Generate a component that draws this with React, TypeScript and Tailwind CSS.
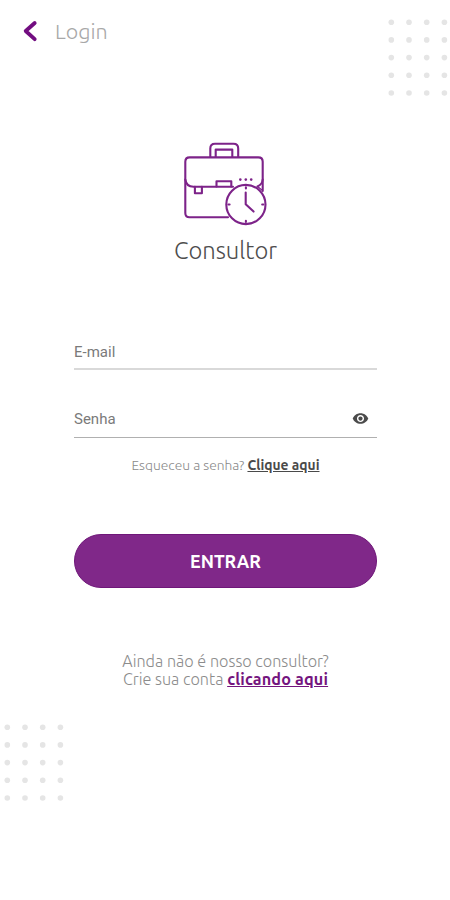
import { useState } from "react";

const UBUNTU = "font-['Ubuntu','Noto_Sans',sans-serif]";

function DotGrid({ className = "" }: { className?: string }) {
  const cols = [0, 1, 2, 3];
  const rows = [0, 1, 2, 3, 4];

  return (
    <svg width="60" height="79" viewBox="0 0 60 79" className={className} fill="#e5e5e5" aria-hidden="true">
      {rows.map((r) =>
        cols.map((c) => <circle key={`${r}-${c}`} cx={3.3 + c * 17.7} cy={4.2 + r * 17.7} r="2.8" />)
      )}
    </svg>
  );
}

function BriefcaseIcon() {
  return (
    <svg
      width="84"
      height="84"
      viewBox="183 142 84 84"
      fill="none"
      stroke="#7d2389"
      strokeWidth="2.1"
      strokeLinecap="round"
      strokeLinejoin="round"
      aria-hidden="true"
    >
      {/* Handle */}
      <path d="M210.3 157V148.5Q210.3 143.8 215 143.8H233.5Q238.2 143.8 238.2 148.5V157" />
      <path d="M215.7 157V149.6H232.3V157" />
      {/* Body */}
      <path d="M228 217.3H189.5Q185.3 217.3 185.3 213V161.8Q185.3 157.4 189.7 157.4H258.3Q262.7 157.4 262.7 161.8V191" />
      {/* Flap */}
      <path d="M185.3 179.5Q186.3 186.7 193.5 186.7H233M262.7 179.5Q262.2 184.5 257.5 186.4" />
      <path d="M216.5 186.5V181.2H231.3V186.5" />
      <path d="M194.9 186.7V193.3H201.9V186.7" />
      <path d="M257.5 186.5L262.5 190.5" strokeWidth="1.3" />
      {/* Clock */}
      <circle cx="245.9" cy="204.5" r="19.6" fill="#fff" />
      <path d="M245.7 192.5V204.3L253.6 211.6" />
      <path d="M245.9 187.2V188.4M245.9 220.8V222M228.4 204.5H229.6M262.2 204.5H263.4" />
      <g fill="#7d2389" stroke="none">
        <circle cx="240.3" cy="179.6" r="1.3" />
        <circle cx="245.8" cy="179.6" r="1.3" />
        <circle cx="251.2" cy="179.6" r="1.3" />
      </g>
    </svg>
  );
}

export default function App() {
  const [visible, setVisible] = useState(false);

  return (
    <div className={`flex h-[900px] w-[450px] flex-col overflow-hidden bg-white ${UBUNTU}`}>
      {/* Header */}
      <header className="flex h-[142px] shrink-0 items-start justify-between pt-[18px]">
        <div className="flex items-center pl-[22px]">
          <button aria-label="Voltar">
            <svg width="16" height="26" viewBox="0 0 16 26" fill="none" stroke="#720d80" strokeWidth="3.8" strokeLinecap="round" strokeLinejoin="round">
              <path d="M12.7 5L3.7 13L12.7 21.2" />
            </svg>
          </button>
          <h1 className="pl-[17px] text-[21.5px] leading-[26px] font-light text-[#a8a8a8]">Login</h1>
        </div>
        <DotGrid className="mr-[2px]" />
      </header>

      {/* Profile */}
      <div className="flex h-[196px] shrink-0 flex-col items-center">
        <BriefcaseIcon />
        <h2 className="mt-[8px] pl-px text-[23.8px] leading-[32px] font-light text-[#4d4d4d]">Consultor</h2>
      </div>

      {/* Form */}
      <form className="ml-[74px] flex w-[303px] flex-col" onSubmit={(e) => e.preventDefault()}>
        <div className="flex h-[32px] items-center border-b-2 border-[#d9d9d9] pb-[2px]">
          <input
            type="email"
            placeholder="E-mail"
            className="w-full font-['Roboto',sans-serif] text-[15px] outline-none placeholder:text-[#7a7a7a]"
          />
        </div>
        <div className="mt-[36px] flex h-[32px] items-center border-b border-[#b0b0b0] pb-[5px]">
          <input
            type={visible ? "text" : "password"}
            placeholder="Senha"
            className="min-w-0 flex-1 font-['Roboto',sans-serif] text-[15px] outline-none placeholder:text-[#7a7a7a]"
          />
          <button type="button" aria-label="Mostrar senha" className="mr-[8px] mb-[1px]" onClick={() => setVisible(!visible)}>
            <svg width="17" height="17" viewBox="0 0 24 24" fill="#4b4b4b">
              <path d="M12 4.5C7 4.5 2.73 7.61 1 12c1.73 4.39 6 7.5 11 7.5s9.27-3.11 11-7.5c-1.73-4.39-6-7.5-11-7.5zM12 17c-2.76 0-5-2.24-5-5s2.24-5 5-5 5 2.24 5 5-2.24 5-5 5zm0-8c-1.66 0-3 1.34-3 3s1.34 3 3 3 3-1.34 3-3-1.34-3-3-3z" />
            </svg>
          </button>
        </div>
        <p className="mt-[18px] text-center text-[13.8px] leading-[18px] font-light whitespace-nowrap text-[#8a8a8a]">
          Esqueceu a senha?{" "}
          <a href="#" className="font-bold text-[#4a4a4a] underline">
            Clique aqui
          </a>
        </p>
        <button type="submit" className="mt-[60px] h-[54px] rounded-full border border-[#6f1779] bg-[#802889] pt-[1px] text-[17.8px] font-bold text-white">
          ENTRAR
        </button>
      </form>

      {/* Sign up */}
      <p className="mt-[64px] pl-px text-center text-[16.2px] leading-[18px] font-light text-[#8c8c8c]">
        Ainda não é nosso consultor?
        <br />
        Crie sua conta{" "}
        <a href="#" className="font-bold tracking-[0.15px] text-[#74147e] underline">
          clicando aqui
        </a>
      </p>

      <DotGrid className="mt-[35px] ml-[4px] shrink-0" />
    </div>
  );
}
